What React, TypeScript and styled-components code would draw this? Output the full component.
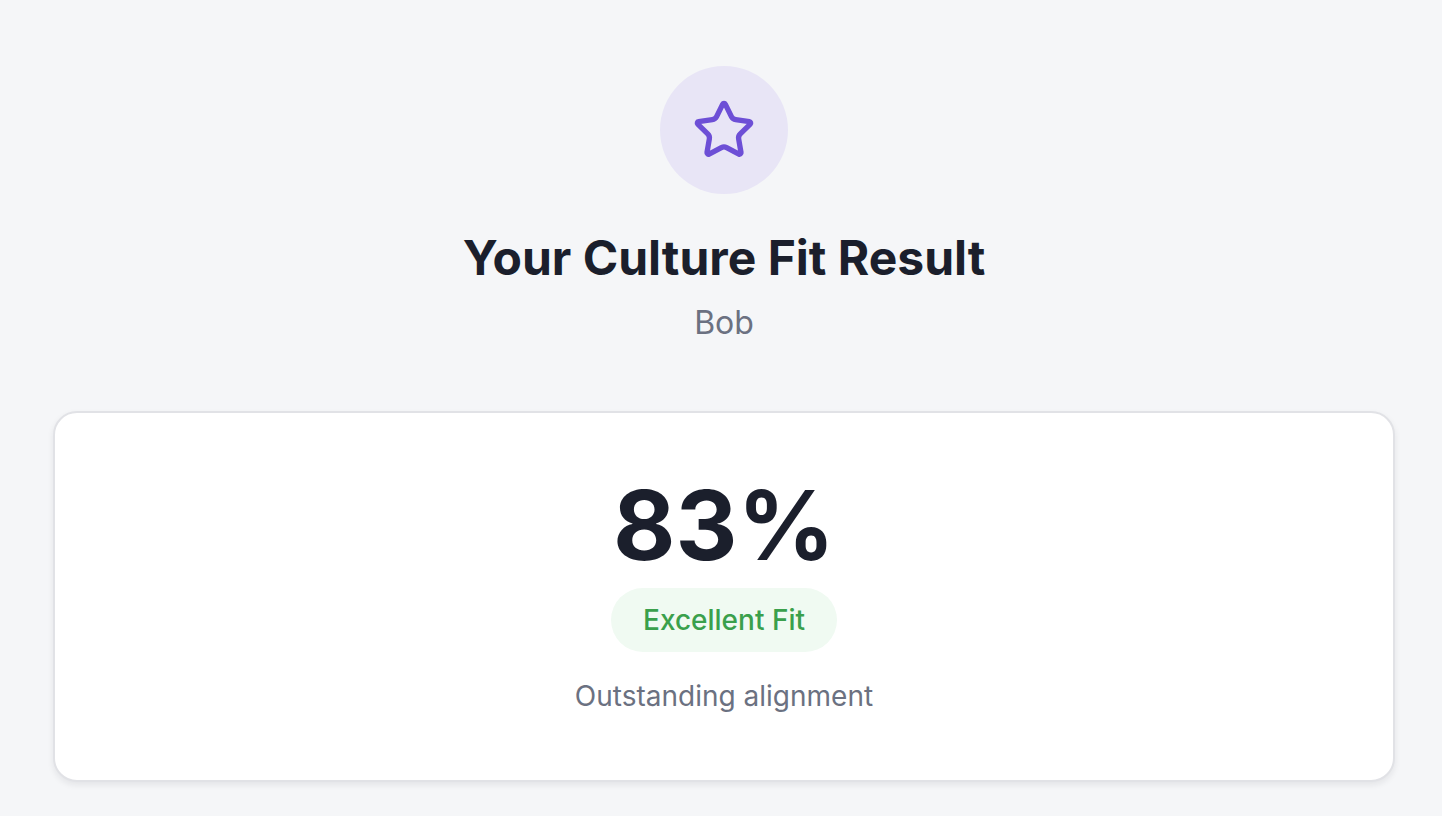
import styled, { createGlobalStyle } from "styled-components"

const GlobalStyle = createGlobalStyle`
  body {
    margin: 0;
    background: #f5f6f8;
    font-family: Inter, "Noto Sans", sans-serif;
  }
`

const Page = styled.div`
  display: flex;
  flex-direction: column;
  align-items: center;
  padding: 66px 47px 36px 53px;
  min-height: 816px;
  box-sizing: border-box;
`

const IconCircle = styled.div`
  width: 128px;
  height: 128px;
  border-radius: 50%;
  background: #e8e5f6;
  display: flex;
  align-items: center;
  justify-content: center;
`

const Title = styled.h1`
  margin: 35px 0 0;
  font-size: 48px;
  line-height: 58px;
  font-weight: 700;
  color: #1b1f2c;
`

const Subtitle = styled.p`
  margin: 12px 0 0;
  font-size: 32px;
  line-height: 48px;
  color: #6b7181;
`

const Card = styled.div`
  margin-top: 64px;
  width: 100%;
  box-sizing: border-box;
  background: #fff;
  border: 2px solid #e1e2e6;
  border-radius: 24px;
  box-shadow: 0 3px 6px rgba(20, 24, 40, 0.08);
  padding: 64px 32px 63px;
  display: flex;
  flex-direction: column;
  align-items: center;
`

const Score = styled.div`
  font-size: 96px;
  line-height: 96px;
  font-weight: 700;
  color: #1b1f2c;
`

const Badge = styled.span<{ $tone: string; $bg: string }>`
  margin-top: 15px;
  height: 64px;
  padding: 0 32px;
  border-radius: 32px;
  display: flex;
  align-items: center;
  background: ${p => p.$bg};
  color: ${p => p.$tone};
  font-size: 28px;
  font-weight: 500;
`

const Note = styled.p`
  margin: 23px 0 0;
  font-size: 28px;
  line-height: 42px;
  color: #6b7181;
`

const StarIcon = () => (
  <svg width="64" height="64" viewBox="0 0 24 24" fill="none" stroke="#6d4fd6" strokeWidth="2" strokeLinecap="round" strokeLinejoin="round">
    <path d="M11.525 2.295a.53.53 0 0 1 .95 0l2.31 4.679a2.123 2.123 0 0 0 1.595 1.16l5.166.756a.53.53 0 0 1 .294.904l-3.736 3.638a2.123 2.123 0 0 0-.611 1.878l.882 5.14a.53.53 0 0 1-.771.56l-4.618-2.428a2.122 2.122 0 0 0-1.973 0L6.396 21.01a.53.53 0 0 1-.77-.56l.881-5.139a2.122 2.122 0 0 0-.611-1.879L2.160 9.795a.53.53 0 0 1 .294-.906l5.165-.755a2.122 2.122 0 0 0 1.597-1.160z" />
  </svg>
)

export default function App() {
  const result = { name: "Bob", score: 83, label: "Excellent Fit", note: "Outstanding alignment" }
  return (
    <>
      <GlobalStyle />
      <Page>
        <IconCircle>
          <StarIcon />
        </IconCircle>
        <Title>Your Culture Fit Result</Title>
        <Subtitle>{result.name}</Subtitle>
        <Card>
          <Score>{result.score}%</Score>
          <Badge $tone="#3aa04c" $bg="#f0faf2">{result.label}</Badge>
          <Note>{result.note}</Note>
        </Card>
      </Page>
    </>
  )
}
